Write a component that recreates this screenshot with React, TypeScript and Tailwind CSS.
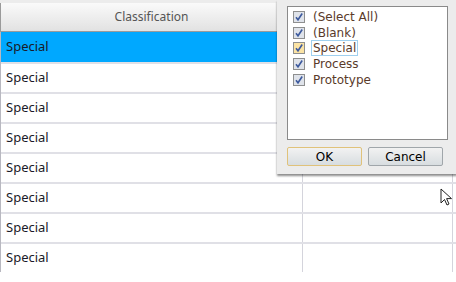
import React from 'react'

const rows = Array.from({ length: 8 }, () => 'Special')

const items = [
  { label: '(Select All)', focus: false },
  { label: '(Blank)', focus: false },
  { label: 'Special', focus: true },
  { label: 'Process', focus: false },
  { label: 'Prototype', focus: false },
]

function Check({ hot }: { hot?: boolean }) {
  return (
    <span
      className={`flex h-[12px] w-[12px] shrink-0 items-center justify-center border border-[#8e8f8f] ${
        hot ? 'bg-[#fbe3a4]' : 'bg-[#dfe3ea]'
      }`}
    >
      <svg width="10" height="10" viewBox="0 0 10 10">
        <path d="M2 5.2 L4 7.8 L8.2 1.5" fill="none" stroke="#3d5a9e" strokeWidth="1.6" />
      </svg>
    </span>
  )
}

export default function App() {
  return (
    <div className="relative h-[282px] w-[456px] overflow-hidden bg-white font-['Noto_Sans',sans-serif]">
      <div className="h-[3px] bg-[#ececec]" />
      {/* header */}
      <div className="flex h-[29px] border-b border-l border-[#9a9a9a] bg-gradient-to-b from-[#fafafa] to-[#e2e2e2]">
        <div className="flex w-[301px] items-center justify-center text-[12px] text-[#555]">Classification</div>
        <div className="flex-1" />
      </div>
      {/* rows */}
      <div className="border-l border-[#b8b8c0]">
        {rows.map((r, i) => (
          <div
            key={i}
            className={`flex h-[30px] ${i === 0 ? 'bg-[#00a8ff]' : 'border-t-2 border-[#e0e0e6]'}`}
          >
            <div className="flex w-[301px] items-center pl-[5px] text-[13px] text-[#1a1a28]">{r}</div>
            <div className={`w-[150px] ${i === 0 ? '' : 'border-l border-[#d4d4dc]'}`} />
            <div className={`flex-1 ${i === 0 ? '' : 'border-l border-[#d4d4dc]'}`} />
          </div>
        ))}
      </div>

      {/* filter popup */}
      <div className="absolute left-[277px] top-0 flex h-[174px] w-[180px] flex-col bg-[#ececec] pl-[10px] pr-[9px] pt-[6px] shadow-[0_2px_2px_rgba(0,0,0,0.45)]">
        <div className="flex h-[134px] flex-col border border-[#8a8a8a] bg-white pl-[5px] pt-[2px] font-['DejaVu_Sans',sans-serif] text-[12px] text-[#5a3a2a]">
          {items.map((it) => (
            <div key={it.label} className="flex h-[15.7px] items-center gap-[6px]">
              <Check hot={it.focus} />
              <span
                className={`leading-[14px] ${
                  it.focus ? 'border border-[#9fd0ef] px-[1px]' : 'border border-transparent px-[1px]'
                }`}
              >
                {it.label}
              </span>
            </div>
          ))}
        </div>
        <div className="mt-[7px] flex gap-[6px]">
          <button className="h-[19px] w-[75px] rounded-[2px] border border-[#e0c27a] bg-gradient-to-b from-[#f2f2f2] to-[#d8dde0] font-['DejaVu_Sans',sans-serif] text-[12px] text-black">
            OK
          </button>
          <button className="h-[19px] w-[75px] rounded-[2px] border border-[#a0a6aa] bg-gradient-to-b from-[#f2f2f2] to-[#d8dde0] font-['DejaVu_Sans',sans-serif] text-[12px] text-black">
            Cancel
          </button>
        </div>
      </div>

      {/* mouse cursor */}
      <svg className="absolute left-[440px] top-[188px]" width="13" height="20" viewBox="0 0 13 20">
        <path d="M1 1 L1 15 L4.5 11.5 L7 17 L9 16 L6.6 10.6 L11.5 10.6 Z" fill="white" stroke="#222" strokeWidth="1" strokeLinejoin="round" />
      </svg>
    </div>
  )
}
